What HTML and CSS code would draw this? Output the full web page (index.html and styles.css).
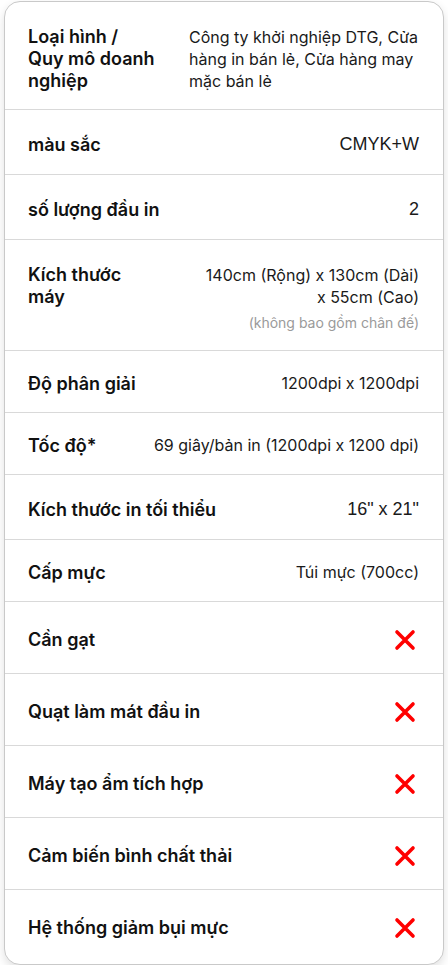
FILE: index.html
```html
<!DOCTYPE html>
<html lang="vi">
<head>
    <meta charset="UTF-8">
    <meta name="viewport" content="width=device-width, initial-scale=1.0">
    <title>Thông số kỹ thuật</title>
    <link rel="stylesheet" href="styles.css">
</head>
<body>

<div class="spec-card">
    <div class="spec-row top">
        <div class="label">Loại hình /<br>Quy mô doanh nghiệp</div>
        <div class="value wide left">Công ty khởi nghiệp DTG, Cửa hàng in bán lẻ, Cửa hàng may mặc bán lẻ</div>
    </div>
    <div class="spec-row">
        <div class="label">màu sắc</div>
        <div class="value big">CMYK+W</div>
    </div>
    <div class="spec-row">
        <div class="label">số lượng đầu in</div>
        <div class="value big">2</div>
    </div>
    <div class="spec-row top size">
        <div class="label narrow">Kích thước máy</div>
        <div class="value wide">
            140cm (Rộng) x 130cm (Dài)<br>x 55cm (Cao)
            <div class="note">(không bao gồm chân đế)</div>
        </div>
    </div>
    <div class="spec-row">
        <div class="label">Độ phân giải</div>
        <div class="value">1200dpi x 1200dpi</div>
    </div>
    <div class="spec-row">
        <div class="label">Tốc độ*</div>
        <div class="value">69 giây/bản in (1200dpi x 1200 dpi)</div>
    </div>
    <div class="spec-row">
        <div class="label">Kích thước in tối thiểu</div>
        <div class="value big">16" x 21"</div>
    </div>
    <div class="spec-row">
        <div class="label">Cấp mực</div>
        <div class="value">Túi mực (700cc)</div>
    </div>
    <div class="spec-row">
        <div class="label">Cần gạt</div>
        <div class="mark"><svg viewBox="0 0 28 28" width="28" height="28"><path d="M6 6L22 22M22 6L6 22"/></svg></div>
    </div>
    <div class="spec-row">
        <div class="label">Quạt làm mát đầu in</div>
        <div class="mark"><svg viewBox="0 0 28 28" width="28" height="28"><path d="M6 6L22 22M22 6L6 22"/></svg></div>
    </div>
    <div class="spec-row">
        <div class="label">Máy tạo ẩm tích hợp</div>
        <div class="mark"><svg viewBox="0 0 28 28" width="28" height="28"><path d="M6 6L22 22M22 6L6 22"/></svg></div>
    </div>
    <div class="spec-row">
        <div class="label">Cảm biến bình chất thải</div>
        <div class="mark"><svg viewBox="0 0 28 28" width="28" height="28"><path d="M6 6L22 22M22 6L6 22"/></svg></div>
    </div>
    <div class="spec-row">
        <div class="label">Hệ thống giảm bụi mực</div>
        <div class="mark"><svg viewBox="0 0 28 28" width="28" height="28"><path d="M6 6L22 22M22 6L6 22"/></svg></div>
    </div>
</div>

</body>
</html>
```

FILE: styles.css
```css
body {
    margin: 0;
    background-color: #fff;
    font-family: Inter, "Noto Sans", sans-serif;
    color: #111;
}

.spec-card {
    margin: 1px 4px 0;
    padding-bottom: 3px;
    border: 1px solid #c9c9c9;
    border-radius: 16px;
    background-color: #fff;
    box-shadow: 0 4px 10px rgba(0, 0, 0, 0.12);
}

.spec-row {
    display: flex;
    justify-content: space-between;
    align-items: center;
    gap: 24px;
    padding: 22px 24px 18px 23px;
    border-bottom: 1px solid #d9d9d9;
}

.spec-row:last-child {
    border-bottom: none;
}

.spec-row.top {
    align-items: flex-start;
    padding-top: 24px;
    padding-bottom: 17px;
}

.spec-row.size {
    padding-top: 24px;
    padding-bottom: 17px;
}

.label {
    flex: 1 1 auto;
    font-size: 18px;
    line-height: 21px;
    font-weight: 600;
}

.top .label {
    line-height: 22px;
}

.label.narrow {
    max-width: 120px;
}

.value {
    flex: 0 0 auto;
    font-size: 16px;
    line-height: 21px;
    text-align: right;
    color: #1a1a1a;
}

.value.wide {
    flex: 0 0 230px;
    line-height: 22px;
}

.value.left {
    text-align: left;
}

.value.big {
    font-family: "Liberation Sans", Arial, sans-serif;
    font-size: 18px;
    line-height: 24px;
}

.note {
    margin-top: 5px;
    font-size: 14px;
    line-height: 20px;
    color: #9a9a9a;
}

.mark {
    display: flex;
    align-items: center;
    height: 31px;
}

.mark svg {
    fill: none;
    stroke: #f00;
    stroke-width: 3.6;
    stroke-linecap: round;
}
```
